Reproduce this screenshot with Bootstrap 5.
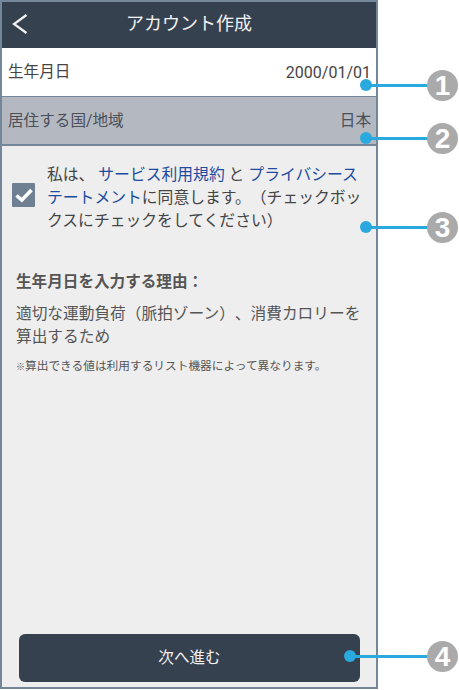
<!DOCTYPE html>
<html lang="ja">
<head>
  <meta charset="UTF-8">
  <title>アカウント作成</title>
  <link href="https://cdn.jsdelivr.net/npm/bootstrap@5.3.0/dist/css/bootstrap.min.css" rel="stylesheet" />
  <style>
    body {
      font-family: "Roboto", "Noto Sans CJK JP", sans-serif;
      background-color: #fff;
      color: #444;
      width: 459px;
      height: 690px;
      overflow: hidden;
      position: relative;
      text-spacing-trim: space-all;
    }
    .phone {
      width: 378px;
      height: 689px;
      border: 2px solid #74879a;
      background-color: #eee;
    }
    .topbar {
      height: 46px;
      flex: none;
      background-color: #364150;
      color: #f2f2f2;
      font-size: 18px;
      padding-bottom: 3px;
      position: relative;
    }
    .backarrow {
      position: absolute;
      left: 10px;
      top: 12px;
    }
    .inforow {
      height: 49px;
      flex: none;
      padding: 2px 5px 0 6px;
      font-size: 15.6px;
      border-bottom: 1px solid #74879a;
    }
    .inforow-white { background-color: #fff; color: #444; }
    .inforow-grey { background-color: #b4b8c1; color: #4a4f58; height: 49px; border-bottom-width: 2px; }
    .date-value { font-size: 16px; }
    .agree {
      padding: 17px 4px 0 10px;
      gap: 12px;
      font-size: 15.8px;
      line-height: 23px;
    }
    .agree a { color: #1c4ba0; text-decoration: none; }
    .tick {
      width: 23px;
      height: 24px;
      flex: none;
      background-color: #6f8092;
      border-radius: 1px;
      margin-top: 20px;
    }
    .reason { padding: 0 14px; }
    .reason-title { font-size: 15.6px; font-weight: 700; color: #555; margin-top: 38px; margin-bottom: 8px; line-height: 24px; }
    .reason-text { font-size: 15.7px; line-height: 23px; color: #555; margin-bottom: 10px; }
    .reason-note { font-size: 11.7px; line-height: 16px; color: #555; }
    .note-mark { font-size: 9px; }
    .nextbtn {
      position: absolute;
      left: 17px;
      top: 632px;
      width: 341px;
      height: 48px;
      padding: 2px 0 0;
      background-color: #364150;
      color: #f2f2f2;
      font-size: 15.6px;
      border-radius: 6px;
      border: 0;
    }
    /* callouts lie over the screenshot */
    .dot {
      position: absolute;
      left: 360px;
      width: 12px;
      height: 12px;
      border-radius: 50%;
      background-color: #2aa9de;
    }
    .leader {
      position: absolute;
      left: 366px;
      width: 66px;
      height: 3px;
      background-color: #2aa9de;
    }
    .num {
      position: absolute;
      left: 427px;
      width: 31px;
      height: 31px;
      border-radius: 50%;
      background-color: #aaa;
      color: #fff;
      font: 700 28px/31px "Liberation Sans", sans-serif;
      text-align: center;
    }
  </style>
</head>
<body>

  <div class="phone d-flex flex-column position-relative">
    <div class="topbar d-flex align-items-center justify-content-center">
      <svg class="backarrow" width="16" height="20" viewBox="0 0 16 20" fill="none" stroke="#f2f2f2" stroke-width="2.2">
        <path d="M14.5 1 L2 10 L14.5 19" />
      </svg>
      <span>アカウント作成</span>
    </div>
    <div class="inforow inforow-white d-flex align-items-center justify-content-between">
      <span>生年月日</span><span class="date-value">2000/01/01</span>
    </div>
    <div class="inforow inforow-grey d-flex align-items-center justify-content-between">
      <span>居住する国/地域</span><span>日本</span>
    </div>
    <div class="agree d-flex align-items-start">
      <div class="tick d-flex align-items-center justify-content-center">
        <svg width="18" height="15" viewBox="0 0 18 15" fill="none" stroke="#fff" stroke-width="3.6">
          <path d="M1.5 7.5 L6.8 12 L16.5 2" />
        </svg>
      </div>
      <div>私は、 <a href="#">サービス利用規約</a> と <a href="#">プライバシーステートメント</a>に同意します。（チェックボックスにチェックをしてください）</div>
    </div>
    <div class="reason">
      <div class="reason-title">生年月日を入力する理由：</div>
      <div class="reason-text">適切な運動負荷（脈拍ゾーン）、消費カロリーを算出するため</div>
      <div class="reason-note"><span class="note-mark">※</span>算出できる値は利用するリスト機器によって異なります。</div>
    </div>
    <button type="button" class="btn nextbtn">次へ進む</button>
  </div>

  <div class="leader" style="top: 84px"></div>
  <div class="dot" style="top: 79px"></div>
  <div class="num" style="top: 70px">1</div>

  <div class="leader" style="top: 137px"></div>
  <div class="dot" style="top: 132px"></div>
  <div class="num" style="top: 123px">2</div>

  <div class="leader" style="top: 226px"></div>
  <div class="dot" style="top: 221px"></div>
  <div class="num" style="top: 212px">3</div>

  <div class="leader" style="top: 655px; left: 350px; width: 82px"></div>
  <div class="dot" style="top: 650px; left: 344px"></div>
  <div class="num" style="top: 641px">4</div>

</body>
</html>
